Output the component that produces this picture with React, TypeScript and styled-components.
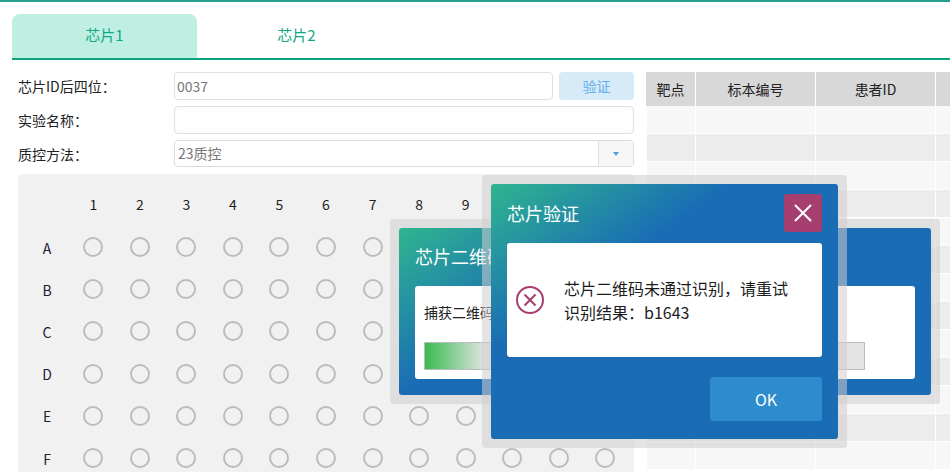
import styled, { createGlobalStyle } from "styled-components";

const rowNames = ["A", "B", "C", "D", "E", "F"];
const colNames = [1, 2, 3, 4, 5, 6, 7, 8, 9, 10, 11, 12];
const tableRows = Array.from({ length: 13 }, (_, i) => i);

const errorLine = "芯片二维码未通过识别\uFF0C请重试";
const resultLine = "识别结果\uFF1Ab1643";

const App = () => {
  return (
    <Page>
      <GlobalStyle />
      <TopBar />
      <Tabs>
        <Tab $active>芯片1</Tab>
        <Tab>芯片2</Tab>
      </Tabs>
      <Content>
        <FormColumn>
          <FormRow>
            <Label>{"芯片ID后四位\uFF1A"}</Label>
            <InputGroup>
              <TextInput>0037</TextInput>
              <VerifyButton>验证</VerifyButton>
            </InputGroup>
          </FormRow>
          <FormRow>
            <Label>{"实验名称\uFF1A"}</Label>
            <TextInput />
          </FormRow>
          <FormRow>
            <Label>{"质控方法\uFF1A"}</Label>
            <Select>
              <SelectValue>23质控</SelectValue>
              <SelectArrow>
                <Triangle />
              </SelectArrow>
            </Select>
          </FormRow>
          <Plate>
            <HeaderCell />
            {colNames.map(col => (
              <HeaderCell key={col}>{col}</HeaderCell>
            ))}
            {rowNames.map(row => (
              <PlateRow key={row}>
                <RowName>{row}</RowName>
                {colNames.map(col => (
                  <WellCell key={col}>
                    <Well />
                  </WellCell>
                ))}
              </PlateRow>
            ))}
          </Plate>
        </FormColumn>
        <TargetTable>
          <thead>
            <tr>
              <HeadCell $width={50}>靶点</HeadCell>
              <HeadCell $width={120}>标本编号</HeadCell>
              <HeadCell $width={120}>患者ID</HeadCell>
              <HeadCell $width={120} />
            </tr>
          </thead>
          <tbody>
            {tableRows.map(row => (
              <BodyRow key={row} $even={row % 2 === 1}>
                <td />
                <td />
                <td />
                <td />
              </BodyRow>
            ))}
          </tbody>
        </TargetTable>
      </Content>

      <ScanFrame>
        <DialogPanel>
          <DialogHeader $height={58}>
            <DialogTitle>芯片二维码识别</DialogTitle>
          </DialogHeader>
          <ScanBody>
            <ScanText>捕获二维码图像</ScanText>
            <ProgressTrack>
              <ProgressFill style={{ width: "14%" }} />
            </ProgressTrack>
          </ScanBody>
        </DialogPanel>
      </ScanFrame>

      <ErrorFrame>
        <DialogPanel>
          <DialogHeader $height={59}>
            <DialogTitle>芯片验证</DialogTitle>
            <CloseButton>
              <svg width="18" height="18" viewBox="0 0 18 18" fill="none" stroke="#fff" strokeWidth="2">
                <path d="M1 1l16 16M17 1L1 17" />
              </svg>
            </CloseButton>
          </DialogHeader>
          <ErrorBody>
            <svg width="30" height="30" viewBox="0 0 30 30" fill="none" stroke="#a63f70" strokeWidth="2">
              <circle cx="15" cy="15" r="13" />
              <path d="M9.5 9.5l11 11M20.5 9.5l-11 11" />
            </svg>
            <ErrorText>
              <div>{errorLine}</div>
              <div>{resultLine}</div>
            </ErrorText>
          </ErrorBody>
          <DialogFooter>
            <OkButton>OK</OkButton>
          </DialogFooter>
        </DialogPanel>
      </ErrorFrame>
    </Page>
  );
};

const GlobalStyle = createGlobalStyle`
  html, body {
    margin: 0;
    padding: 0;
    background: #fff;
    overflow: hidden;
  }
  body {
    font-family: "Noto Sans CJK SC", "Noto Sans", sans-serif;
    font-size: 14px;
    color: #222;
  }
`;

const Page = styled.div`
  position: relative;
  width: 950px;
  height: 472px;
  overflow: hidden;
`;

const TopBar = styled.div`
  height: 2px;
  background: #26a08e;
`;

const Tabs = styled.div`
  display: flex;
  height: 44px;
  margin: 12px 0 0 12px;
  border-bottom: 2px solid #0aa37f;
`;

const Tab = styled.div<{ $active?: boolean }>`
  width: 185px;
  margin-right: 7px;
  padding-bottom: 4px;
  box-sizing: border-box;
  display: flex;
  align-items: center;
  justify-content: center;
  border-radius: 8px 8px 0 0;
  font-size: 15px;
  color: #10a985;
  background: ${props => (props.$active ? "#bfeee3" : "transparent")};
`;

const Content = styled.div`
  display: flex;
  gap: 12px;
  padding: 12px 0 0 18px;
`;

const FormColumn = styled.div`
  width: 616px;
  flex-shrink: 0;
  display: flex;
  flex-direction: column;
  gap: 6px;
`;

const FormRow = styled.div`
  display: flex;
  align-items: flex-start;
  height: 28px;
`;

const Label = styled.div`
  width: 156px;
  flex-shrink: 0;
  line-height: 28px;
  color: #222;
`;

const InputGroup = styled.div`
  flex: 1;
  display: flex;
  gap: 6px;
  height: 100%;
`;

const TextInput = styled.div`
  flex: 1;
  height: 28px;
  box-sizing: border-box;
  padding-left: 2px;
  line-height: 26px;
  border: 1px solid #e0e0e0;
  border-radius: 4px;
  color: #777;
`;

const VerifyButton = styled.div`
  width: 75px;
  display: flex;
  align-items: center;
  justify-content: center;
  border-radius: 4px;
  background: #d6eaf8;
  color: #5fb0ea;
`;

const Select = styled.div`
  flex: 1;
  display: flex;
  height: 27px;
  box-sizing: border-box;
  border: 1px solid #dcdcdc;
  border-radius: 4px;
  overflow: hidden;
`;

const SelectValue = styled.div`
  flex: 1;
  padding-left: 3px;
  line-height: 25px;
  color: #777;
`;

const SelectArrow = styled.div`
  width: 34px;
  display: flex;
  align-items: center;
  justify-content: center;
  border-left: 1px solid #dcdcdc;
  background: #f7f7f7;
`;

const Triangle = styled.div`
  width: 0;
  height: 0;
  border-left: 3.5px solid transparent;
  border-right: 3.5px solid transparent;
  border-top: 4px solid #4a9fe0;
`;

const Plate = styled.div`
  display: grid;
  grid-template-columns: 46px repeat(12, 46.55px);
  grid-template-rows: 42px;
  grid-auto-rows: 42.2px;
  height: 320px;
  padding: 10px 0 0 6px;
  border-radius: 4px;
  background: #f1f1f1;
`;

const HeaderCell = styled.div`
  display: flex;
  align-items: center;
  justify-content: center;
  padding-bottom: 2px;
  color: #222;
`;

const PlateRow = styled.div`
  display: contents;
`;

const RowName = styled.div`
  display: flex;
  align-items: center;
  justify-content: center;
  padding-top: 1px;
  color: #1c2233;
`;

const WellCell = styled.div`
  display: flex;
  align-items: center;
  justify-content: center;
`;

const Well = styled.div`
  width: 20px;
  height: 20px;
  box-sizing: border-box;
  border: 2px solid #bcbcbc;
  border-radius: 50%;
`;

const TargetTable = styled.table`
  flex-shrink: 0;
  align-self: flex-start;
  table-layout: fixed;
  width: 410px;
  border-collapse: separate;
  border-spacing: 0;

  td {
    height: 28px;
    padding: 0;
    box-sizing: border-box;
    border-right: 1px solid #fff;
    border-bottom: 1px solid #fff;
  }

  td:first-child {
    border-left: 1px solid #fff;
  }
`;

const HeadCell = styled.th<{ $width: number }>`
  width: ${props => props.$width}px;
  height: 34px;
  padding: 0;
  box-sizing: border-box;
  border-right: 1px solid #fff;
  background: #d8d8d8;
  font-weight: 400;
  color: #222;
`;

const BodyRow = styled.tr<{ $even: boolean }>`
  background: ${props => (props.$even ? "#ececec" : "#f7f7f7")};
`;

const DialogFrame = styled.div`
  position: absolute;
  box-sizing: border-box;
  padding: 9px;
  border-radius: 4px;
  background: rgba(205, 205, 205, 0.55);
`;

const ScanFrame = styled(DialogFrame)`
  left: 390px;
  top: 219px;
  width: 550px;
  height: 185px;
`;

const ErrorFrame = styled(DialogFrame)`
  left: 482px;
  top: 175px;
  width: 365px;
  height: 273px;
`;

const DialogPanel = styled.div`
  height: 100%;
  box-sizing: border-box;
  padding: 0 16px;
  border-radius: 3px;
  background: linear-gradient(145deg, #2fb58f 0, #1a6cb5 138px);
`;

const DialogHeader = styled.div<{ $height: number }>`
  display: flex;
  align-items: center;
  justify-content: space-between;
  height: ${props => props.$height}px;
  box-sizing: border-box;
  padding-bottom: 2px;
`;

const DialogTitle = styled.div`
  font-size: 18px;
  color: #fff;
`;

const CloseButton = styled.div`
  width: 38px;
  height: 38px;
  display: flex;
  align-items: center;
  justify-content: center;
  margin-top: 1px;
  border-radius: 3px;
  background: #a63f70;
`;

const ScanBody = styled.div`
  height: 93px;
  box-sizing: border-box;
  padding: 14px 50px 0 9px;
  border-radius: 3px;
  background: #fff;
`;

const ScanText = styled.div`
  height: 28px;
  line-height: 24px;
  margin-bottom: 14px;
  color: #222;
`;

const ProgressTrack = styled.div`
  height: 28px;
  box-sizing: border-box;
  border: 1px solid #bcbcbc;
  background: #e4e4e4;
`;

const ProgressFill = styled.div`
  height: 100%;
  background: linear-gradient(90deg, #38bb50, rgba(56, 187, 80, 0));
`;

const ErrorBody = styled.div`
  display: flex;
  align-items: center;
  gap: 19px;
  height: 114px;
  box-sizing: border-box;
  padding-left: 8px;
  border-radius: 3px;
  background: #fff;
`;

const ErrorText = styled.div`
  font-size: 16px;
  line-height: 24px;
  color: #1c1c1c;
`;

const DialogFooter = styled.div`
  display: flex;
  justify-content: flex-end;
  padding-top: 20px;
`;

const OkButton = styled.div`
  width: 112px;
  height: 44px;
  display: flex;
  align-items: center;
  justify-content: center;
  border-radius: 3px;
  background: #2e8bcd;
  color: #fff;
  font-size: 16px;
`;

export default App;
